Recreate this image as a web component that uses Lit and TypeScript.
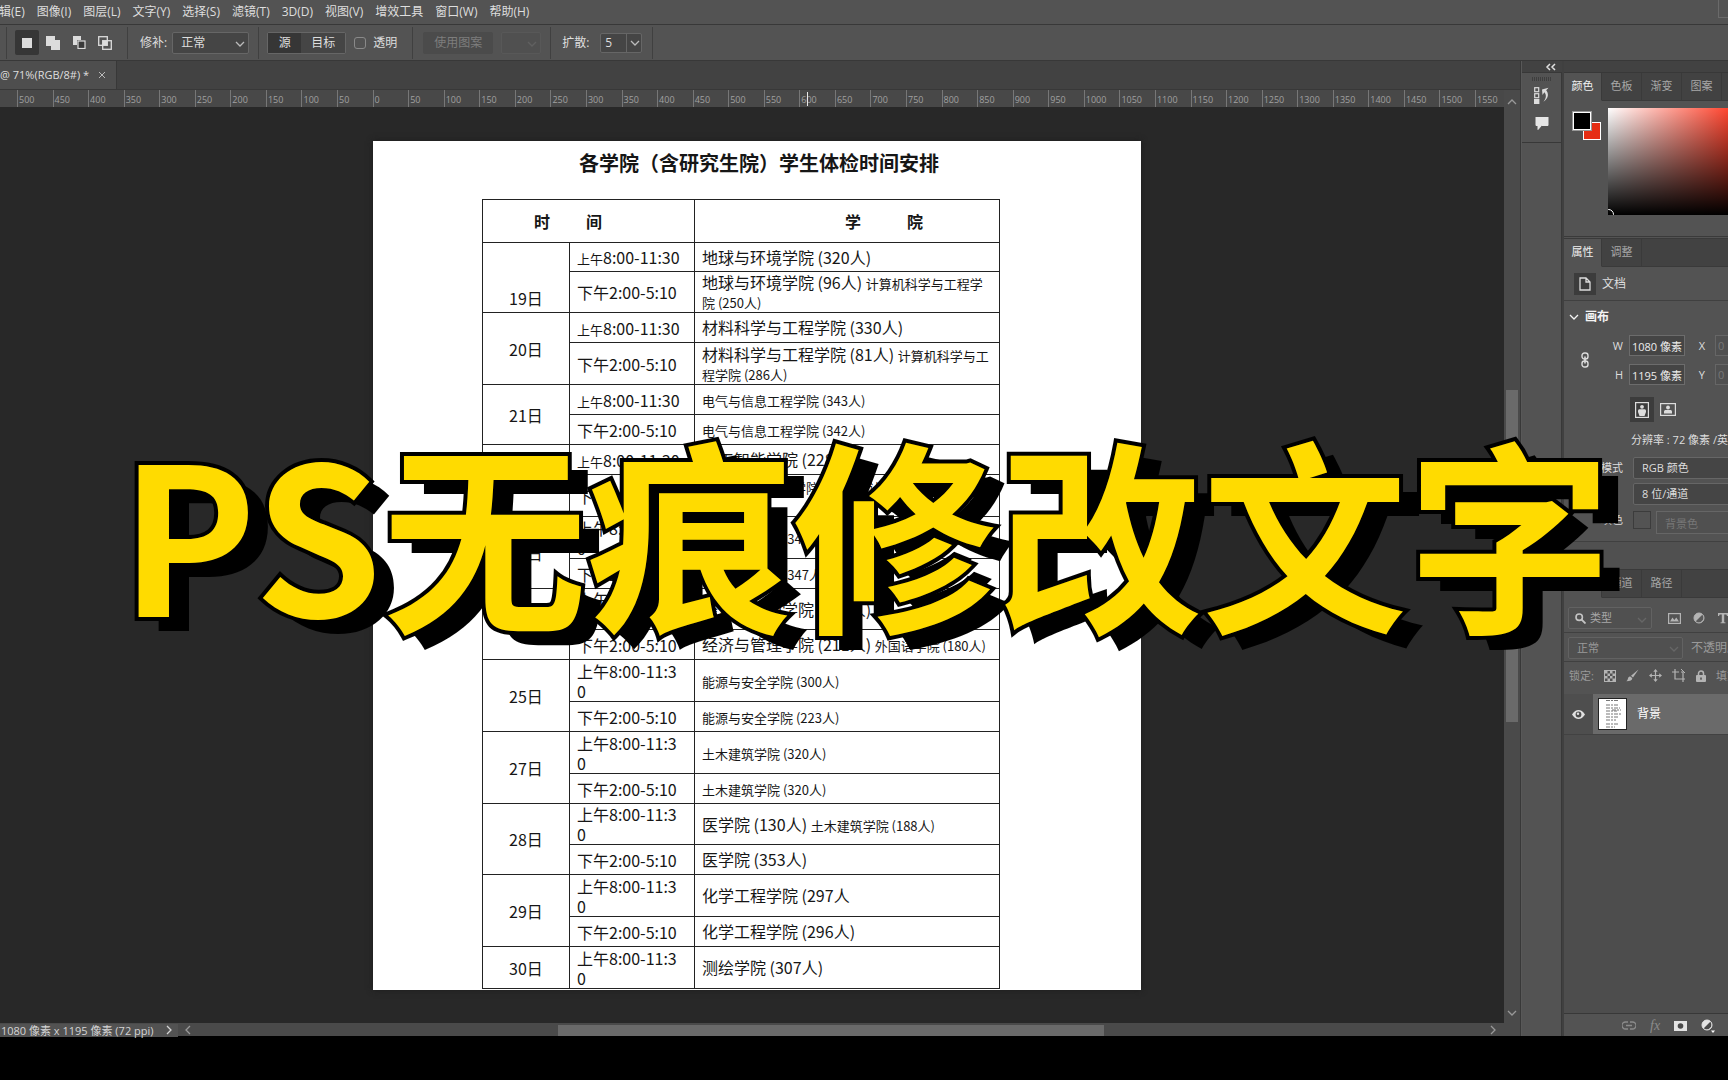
import { LitElement, html, css, svg, nothing } from "lit";
import { customElement } from "lit/decorators.js";

type Part = { t: string; small?: boolean };
type Slot = { size: "slim" | "short" | "mid" | "tall"; time: "am" | "pm" | "wrap"; who: Part[] };
type Day = { day: string; low?: boolean; slots: Slot[] };

const L = (t: string): Part => ({ t });
const S = (t: string): Part => ({ t, small: true });

const DAYS: Day[] = [
  { day: "19日", low: true, slots: [
    { size: "slim", time: "am", who: [L("地球与环境学院 (320人)")] },
    { size: "mid", time: "pm", who: [L("地球与环境学院 (96人) "), S("计算机科学与工程学院 (250人)")] },
  ] },
  { day: "20日", slots: [
    { size: "short", time: "am", who: [L("材料科学与工程学院 (330人)")] },
    { size: "tall", time: "pm", who: [L("材料科学与工程学院 (81人) "), S("计算机科学与工程学院 (286人)")] },
  ] },
  { day: "21日", slots: [
    { size: "short", time: "am", who: [S("电气与信息工程学院 (343人)")] },
    { size: "short", time: "pm", who: [S("电气与信息工程学院 (342人)")] },
  ] },
  { day: "22日", slots: [
    { size: "short", time: "am", who: [L("人工智能学院 (228人)")] },
    { size: "tall", time: "pm", who: [S("电气与信息工程学院 (120人) 计算机科学与工程学院 (160人)")] },
  ] },
  { day: "23日", slots: [
    { size: "tall", time: "wrap", who: [S("机械工程学院 (347人)")] },
    { size: "short", time: "pm", who: [S("机械工程学院 (347人)")] },
  ] },
  { day: "24日", slots: [
    { size: "mid", time: "wrap", who: [L("经济与管理学院 (300人)")] },
    { size: "short", time: "pm", who: [L("经济与管理学院 (211人) "), S("外国语学院 (180人)")] },
  ] },
  { day: "25日", slots: [
    { size: "tall", time: "wrap", who: [S("能源与安全学院 (300人)")] },
    { size: "short", time: "pm", who: [S("能源与安全学院 (223人)")] },
  ] },
  { day: "27日", slots: [
    { size: "tall", time: "wrap", who: [S("土木建筑学院 (320人)")] },
    { size: "short", time: "pm", who: [S("土木建筑学院 (320人)")] },
  ] },
  { day: "28日", slots: [
    { size: "mid", time: "wrap", who: [L("医学院 (130人) "), S("土木建筑学院 (188人)")] },
    { size: "short", time: "pm", who: [L("医学院 (353人)")] },
  ] },
  { day: "29日", slots: [
    { size: "tall", time: "wrap", who: [L("化学工程学院 (297人")] },
    { size: "short", time: "pm", who: [L("化学工程学院 (296人)")] },
  ] },
  { day: "30日", slots: [
    { size: "tall", time: "wrap", who: [L("测绘学院 (307人)")] },
  ] },
];

const MENUS = ["编辑(E)", "图像(I)", "图层(L)", "文字(Y)", "选择(S)", "滤镜(T)", "3D(D)", "视图(V)", "增效工具", "窗口(W)", "帮助(H)"];

const chevron = (dir: "down" | "up" | "left" | "right") => {
  const d = { down: "M1 3l4 4 4-4", up: "M1 7l4-4 4 4", left: "M7 1L3 5l4 4", right: "M3 1l4 4-4 4" }[dir];
  return html`<svg class="chev" viewBox="0 0 10 10" width="10" height="10" aria-hidden="true"><path d=${d} fill="none" stroke="currentColor" stroke-width="1.3"/></svg>`;
};

const icon = (w: number, h: number, body: unknown) =>
  html`<svg class="ico" viewBox="0 0 ${w} ${h}" width=${w} height=${h} aria-hidden="true">${body}</svg>`;

const I = {
  newSel: icon(10, 10, svg`<rect width="10" height="10" fill="#dcdcdc"/>`),
  addSel: icon(14, 14, svg`<path d="M0 0h9v4h5v10H5v-4H0z" fill="#dcdcdc"/>`),
  subSel: icon(13, 13, svg`<path d="M0 0h8v4H4v5H0z" fill="#dcdcdc"/><rect x="5" y="5" width="7" height="7.500" fill="#3a3a3a" stroke="#dcdcdc" stroke-width="1.200"/>`),
  intSel: icon(14, 14, svg`<rect x=".7" y=".7" width="8.600" height="8.600" fill="none" stroke="#dcdcdc" stroke-width="1.300"/><rect x="4.700" y="4.700" width="8.600" height="8.600" fill="none" stroke="#dcdcdc" stroke-width="1.300"/><rect x="5" y="5" width="4" height="4" fill="#dcdcdc"/>`),
  history: icon(16, 18, svg`<rect x=".7" y=".7" width="4" height="4" fill="none" stroke="#dcdcdc" stroke-width="1.200"/><rect x=".7" y="6.700" width="4" height="4" fill="none" stroke="#dcdcdc" stroke-width="1.200"/><rect y="12" width="5.400" height="5" fill="#dcdcdc"/><path d="M8 2.500l6.500-1.800-2.300 2.600c2.500 3 2.800 7.500-2.700 11.500 3-4 3-6.800.9-9.500L8.500 8z" fill="#dcdcdc"/>`),
  comment: icon(14, 13, svg`<path d="M1 0h12v8.500H6.500L3 12.500V8.500H1z" fill="#e6e6e6" stroke="#e6e6e6" stroke-linejoin="round"/>`),
  doc: icon(12, 14, svg`<path d="M1 1h6l4 4v8H1zM7 1v4h4" fill="none" stroke="#dcdcdc" stroke-width="1.300"/>`),
  chain: icon(8, 16, svg`<rect x="1" y="1" width="6" height="6" rx="2.500" fill="none" stroke="#dcdcdc" stroke-width="1.400"/><rect x="1" y="9" width="6" height="6" rx="2.500" fill="none" stroke="#dcdcdc" stroke-width="1.400"/><path d="M4 4.500v7" stroke="#dcdcdc" stroke-width="1.600"/>`),
  portrait: icon(14, 16, svg`<rect x=".6" y=".6" width="12.800" height="14.800" fill="none" stroke="#dcdcdc" stroke-width="1.200"/><circle cx="7" cy="4.800" r="1.900" fill="#dcdcdc"/><path d="M3 10V8.500C3 7.500 4 7.200 5 7.200h4c1 0 2 .3 2 1.300V10L9.500 14h-5z" fill="#dcdcdc"/>`),
  landscape: icon(16, 13, svg`<rect x=".6" y=".6" width="14.800" height="11.800" fill="none" stroke="#dcdcdc" stroke-width="1.200"/><circle cx="8" cy="4.500" r="1.900" fill="#dcdcdc"/><path d="M4 10.500V8.500c0-1 .8-1.500 2-1.500h4c1.200 0 2 .5 2 1.500v2z" fill="#dcdcdc"/>`),
  search: icon(11, 11, svg`<circle cx="4.200" cy="4.200" r="3.200" fill="none" stroke="#c4c4c4" stroke-width="1.600"/><path d="M6.500 6.500l4 4" stroke="#c4c4c4" stroke-width="1.800"/>`),
  picture: icon(13, 11, svg`<rect x=".6" y=".6" width="11.800" height="9.800" fill="none" stroke="#b4b4b4" stroke-width="1.200"/><path d="M2 8.500l2.500-4L6.300 7l2-2.500 2.700 4z" fill="#b4b4b4"/>`),
  adjust: icon(12, 12, svg`<circle cx="6" cy="6" r="5" fill="#b4b4b4"/><path d="M2.500 9.500A5 5 0 0 0 9.500 2.500z" fill="#5a5a5a"/><circle cx="6" cy="6" r="5" fill="none" stroke="#b4b4b4"/>`),
  type: icon(12, 12, svg`<path d="M1 1h10v3h-1L9.300 2.400H7.200v7.800l1.300.3v.7h-5v-.7l1.300-.3V2.400H2.700L2 4H1z" fill="#b4b4b4"/>`),
  checker: icon(12, 12, svg`<rect x=".5" y=".5" width="11" height="11" fill="none" stroke="#b4b4b4"/><path d="M1 1h2.500v2.500H1zM6 1h2.500v2.500H6zM3.500 3.500H6V6H3.500zM8.500 3.500H11V6H8.500zM1 6h2.500v2.500H1zM6 6h2.500v2.500H6zM3.500 8.500H6V11H3.500zM8.500 8.500H11V11H8.500z" fill="#b4b4b4"/>`),
  brush: icon(13, 13, svg`<path d="M12.500.5L7 8.500 5 6.800zM4.300 7.500l2 1.800c0 2-2 3-6 3 1.500-1 1.300-2 1.800-3.300.4-1 1.200-1.500 2.200-1.500z" fill="#b4b4b4"/>`),
  move: icon(13, 13, svg`<path d="M6.500 1.500v10M1.500 6.500h10" stroke="#b4b4b4" stroke-width="1.200"/><path d="M6.500 0l2.200 2.800H4.300zM6.500 13l2.200-2.800H4.300zM0 6.500l2.800-2.200v4.400zM13 6.500l-2.800-2.200v4.400z" fill="#b4b4b4"/>`),
  frame: icon(14, 13, svg`<path d="M3 0v10h10M0 3h7M11 5v8M9 3l2 0v2" fill="none" stroke="#b4b4b4" stroke-width="1.200"/><path d="M9 0l4 4" stroke="#b4b4b4"/>`),
  lock: icon(10, 12, svg`<rect y="5" width="10" height="7" rx="1" fill="#b4b4b4"/><path d="M2.500 5V3.500a2.500 2.500 0 0 1 5 0V5" fill="none" stroke="#b4b4b4" stroke-width="1.500"/><rect x="4.200" y="7.500" width="1.600" height="2.200" fill="#535353"/>`),
  eye: icon(13, 9, svg`<path d="M0 4.500C2 1.300 4.200 0 6.500 0S11 1.300 13 4.500C11 7.700 8.800 9 6.500 9S2 7.700 0 4.500z" fill="#e0e0e0"/><circle cx="6.500" cy="4.500" r="2.900" fill="#4d4d4d"/><circle cx="6" cy="3.800" r="1.200" fill="#e0e0e0"/>`),
  link2: icon(14, 9, svg`<path d="M6 1H3.500a3.200 3.200 0 0 0 0 7H6M8 1h2.500a3.200 3.200 0 0 1 0 7H8M4 4.500h6" fill="none" stroke="#8c8c8c" stroke-width="1.300"/>`),
  mask: icon(13, 10, svg`<rect width="13" height="10" fill="#e4e4e4"/><circle cx="6.500" cy="5" r="2.800" fill="#4a4a4a"/>`),
  adjust2: icon(14, 14, svg`<circle cx="6" cy="6" r="5" fill="#e4e4e4"/><path d="M2.500 9.500A5 5 0 0 0 9.500 2.500z" fill="#4a4a4a"/><circle cx="6" cy="6" r="5" fill="none" stroke="#e4e4e4"/><path d="M10 11.500h4l-2 2.500z" fill="#fff"/>`),
};

@customElement("exam-sheet")
export class ExamSheet extends LitElement {
  static styles = css`
    :host { display: block; background: #fff; color: #161616; font-family: "Noto Sans CJK SC", sans-serif; padding: 8px 128px 1px 109px; box-shadow: 0 0 6px #1c1c1c; }
    h2 { margin: 0 0 22px 97px; font-size: 20px; line-height: 28px; font-weight: 700; white-space: nowrap; }
    table { border-collapse: collapse; table-layout: fixed; width: 518px; font-size: 16px; line-height: 20px; }
    .c1 { width: 87px; }
    .c2 { width: 125px; }
    th, td { border: 1px solid #222; padding: 0; }
    .head { height: 42px; text-align: left; }
    .when { padding-left: 51px; }
    .where { padding-left: 150px; }
    .pair { display: flex; gap: 36px; }
    .wide { gap: 46px; }
    .day { text-align: center; }
    .low { vertical-align: bottom; padding-bottom: 4px; }
    .time, .who { padding: 0 6px 0 7px; text-align: left; }
    .who { line-height: 19px; }
    .time { white-space: nowrap; }
    .slim { height: 28px; }
    .short { height: 29px; }
    .mid { height: 40px; }
    .tall { height: 41px; }
    .small { font-size: 13px; line-height: 14px; }
  `;
  private time(k: Slot["time"]) {
    if (k === "am") return html`<span class="small">上午</span>8:00-11:30`;
    if (k === "pm") return html`下午2:00-5:10`;
    return html`上午8:00-11:3<br>0`;
  }
  render() {
    return html`
      <h2>各学院（含研究生院）学生体检时间安排</h2>
      <table>
        <colgroup><col class="c1"><col class="c2"><col></colgroup>
        <thead>
          <tr>
            <th class="head when" colspan="2"><span class="pair"><span>时</span><span>间</span></span></th>
            <th class="head where"><span class="pair wide"><span>学</span><span>院</span></span></th>
          </tr>
        </thead>
        <tbody>
          ${DAYS.map((d) => d.slots.map((s, i) => html`
            <tr>
              ${i === 0 ? html`<td class="day ${d.low ? "low" : ""}" rowspan=${d.slots.length}>${d.day}</td>` : nothing}
              <td class="time ${s.size}">${this.time(s.time)}</td>
              <td class="who">${s.who.map((p) => html`<span class=${p.small ? "small" : ""}>${p.t}</span>`)}</td>
            </tr>`))}
        </tbody>
      </table>`;
  }
}

@customElement("app-root")
export class AppRoot extends LitElement {
  static styles = css`
    :host { display: flex; flex-direction: column; position: relative; min-height: 100vh; box-sizing: border-box; padding-bottom: 44px; overflow: hidden; background: #000; color: #dedede; font-family: "Open Sans", "Noto Sans CJK SC", sans-serif; font-size: 12px; line-height: 16px; }
    * { box-sizing: border-box; }
    svg { display: block; flex: none; }
    button, select, input { font: inherit; color: inherit; margin: 0; }
    button { background: none; border: 0; padding: 0; white-space: nowrap; }
    .menu { display: flex; align-items: center; gap: 12px; height: 25px; background: #535353; border-bottom: 1px solid #383838; white-space: nowrap; }
    .menu button:first-child { margin-left: -13px; }
    .corner { margin-left: auto; width: 10px; height: 18px; align-self: flex-start; border: 1px solid #6a6a6a; border-width: 0 0 1px 1px; }
    .options { display: flex; align-items: center; height: 36px; background: #535353; border-bottom: 1px solid #383838; padding: 0 6px; white-space: nowrap; }
    .sep { width: 1px; height: 32px; background: #404040; flex: none; }
    .modes { display: flex; align-items: center; gap: 2px; padding: 0 10px 0 8px; }
    .modes button { width: 24px; height: 25px; display: grid; place-items: center; border-radius: 2px; }
    .modes .on { background: #363636; }
    .group { display: flex; align-items: center; }
    .patch { gap: 5px; padding: 0 9px 0 12px; }
    .pick { position: relative; display: block; }
    .pick select { display: block; width: 100%; height: 22px; appearance: none; background: #454545; border: 1px solid #666; border-radius: 2px; padding: 0 0 0 8px; }
    .pick .chev { position: absolute; right: 4px; top: 7px; color: #bbb; pointer-events: none; }
    .p-mode { width: 77px; }
    .seg { margin: 0 8px; border: 1px solid #666; border-radius: 2px; height: 22px; }
    .seg button { height: 20px; background: #454545; width: 44px; }
    .seg .on { background: #363636; width: 33px; }
    .clear { gap: 7px; margin-right: 15px; }
    .clear input { appearance: none; width: 12px; height: 12px; border: 1px solid #8a8a8a; border-radius: 3px; }
    .pattern { width: 70px; height: 22px; margin: 0 8px 0 10px; background: #4b4b4b; color: #7d7d7d; border-radius: 2px; }
    .p-dim { width: 40px; margin-right: 9px; }
    .p-dim select { background: #505050; border-color: #5b5b5b; }
    .p-dim .chev { color: #606060; }
    .spread { gap: 11px; padding: 0 10px 0 11px; }
    .p-num { width: 42px; }
    .p-num select { padding-left: 4px; height: 20px; }
    .p-num::after { content: ""; position: absolute; right: 15px; top: 1px; bottom: 1px; width: 1px; background: #666; }
    .p-num .chev { right: 2px; top: 5px; }
    .main { display: grid; grid-template-columns: minmax(0, 1fr) 41px 166px; flex: 1; background: #535353; }
    .work { display: flex; flex-direction: column; border-right: 1px solid #383838; }
    .tabs { display: flex; height: 28px; background: #424242; }
    .tab { display: flex; align-items: center; gap: 9px; width: 117px; background: #4e4e4e; border-right: 1px solid #383838; white-space: nowrap; font-size: 11px; }
    .view { display: grid; grid-template-columns: minmax(0, 1fr) 16px; grid-template-rows: 17px minmax(0, 1fr); flex: 1; background: #4a4a4a; border-top: 1px solid #383838; }
    .ruler { position: relative; display: grid; grid-template-columns: repeat(41, 1fr) 29px; padding-left: 17px; color: #a0a0a0; font-size: 9px; line-height: 20px; background: #484848; overflow: hidden; }
    .mark { border-left: 1px solid #777; padding-left: 1px; background: repeating-linear-gradient(to right, transparent 0 calc(10% - 1px), #6a6a6a calc(10% - 1px) 10%) bottom / 100% 2px no-repeat; }
    .cursor { position: absolute; left: 807px; top: 2px; width: 1px; height: 14px; background: #e8e8e8; }
    .canvas { background: #282828; padding: 34px 0 33px 373px; }
    exam-sheet { width: 768px; }
    .vbar { grid-column: 2; grid-row: 1 / 3; display: flex; flex-direction: column; align-items: center; padding: 7px 0 5px; color: #999; }
    .vthumb { width: 12px; height: 332px; margin: 283px 0 auto; background: #6a6a6a; }
    .status { display: flex; align-items: center; height: 13px; background: #4a4a4a; color: #d4d4d4; white-space: nowrap; font-size: 11px; line-height: 13px; padding-top: 1px; }
    .info { display: flex; align-items: center; justify-content: space-between; width: 178px; padding: 0 4px 0 1px; background: #525252; }
    .hbar { display: flex; flex: 1; align-items: center; padding: 0 22px 0 5px; color: #999; }
    .hthumb { width: 546px; height: 11px; margin: 1px auto 0 365px; background: #6a6a6a; }
    .dock { border-right: 1px solid #383838; border-left: 1px solid #585858; }
    .strip { display: flex; justify-content: flex-end; align-items: center; height: 12px; background: #424242; border-bottom: 1px solid #383838; margin-right: -1px; }
    .icons { display: flex; flex-direction: column; align-items: center; gap: 12px; padding: 4px 0 12px; border-bottom: 1px solid #383838; }
    .grip { width: 20px; height: 4px; margin-bottom: -6px; background: repeating-linear-gradient(to right, #3e3e3e 0 1px, transparent 1px 2px); }
    .side { display: flex; flex-direction: column; border-left: 2px solid #404040; overflow: hidden; font-size: 11px; white-space: nowrap; }
    .side .strip { padding: 0; margin: 0; flex: none; }
    .ptabs { display: flex; height: 28px; background: #424242; flex: none; }
    .ptabs button { width: 40px; flex: none; border-right: 1px solid #3a3a3a; border-bottom: 1px solid #3a3a3a; color: #a8a8a8; padding-bottom: 2px; }
    .ptabs .on { width: 38px; background: #535353; color: #f0f0f0; border-bottom-color: #535353; }
    .ptabs::after { content: ""; flex: 1; border-bottom: 1px solid #3a3a3a; }
    .color { display: flex; height: 138px; padding: 7px 0 0 7px; gap: 7px; flex: none; border-bottom: 3px double #3a3a3a; }
    .swatches { position: relative; width: 30px; height: 32px; margin-top: 2px; }
    .fg, .bg { position: absolute; width: 18px; height: 18px; border: 1px solid #fff; }
    .fg { left: 2px; top: 2px; background: #000; outline: 1px solid #999; }
    .bg { left: 12px; top: 12px; background: #e62e14; }
    .field { position: relative; flex: 1; height: 107px; overflow: hidden; background: linear-gradient(to bottom, transparent, #000), linear-gradient(to right, #fff, #ff4630); }
    .dot { position: absolute; left: -5px; bottom: -5px; width: 11px; height: 11px; border: 1px solid #fff; border-radius: 50%; }
    .docrow { display: flex; align-items: center; gap: 6px; height: 34px; padding-left: 10px; border-bottom: 1px solid #404040; flex: none; font-size: 12px; }
    .docbox { display: grid; place-items: center; width: 22px; height: 22px; background: #3c3c3c; }
    .sect { display: flex; align-items: center; gap: 6px; height: 31px; padding-left: 5px; color: #f4f4f4; font-weight: 700; font-size: 12px; flex: none; }
    .size { display: grid; grid-template-columns: 12px 24px 56px 14px 60px; column-gap: 6px; row-gap: 8px; align-items: center; padding: 3px 0 0 17px; flex: none; }
    .size label { text-align: right; }
    .size .chain { grid-row: 1 / 3; }
    .size input, .fillrow input { width: 100%; height: 21px; min-width: 0; border: 1px solid #6c6c6c; background: #454545; padding: 0 2px; color: #ececec; }
    .size input:disabled, .fillrow input:disabled { background: #505050; color: #777; border-color: #666; }
    .size input:disabled { margin-left: 4px; }
    .orient { display: flex; align-items: center; gap: 2px; padding: 12px 0 0 66px; flex: none; }
    .orient button { width: 24px; height: 25px; display: grid; place-items: center; }
    .orient .on { background: #3c3c3c; }
    .res { padding: 10px 0 9px 67px; flex: none; }
    .form { display: grid; grid-template-columns: 59px 130px; column-gap: 10px; row-gap: 4px; flex: none; }
    .form > label { text-align: right; line-height: 22px; }
    .fillrow { display: flex; gap: 5px; padding-top: 2px; }
    .fillrow input { padding-left: 8px; height: 23px; flex: 1; }
    .chip { width: 18px; height: 18px; border: 1px solid #3c3c3c; flex: none; }
    .gap { height: 29px; margin-top: 7px; border-top: 1px solid #404040; background: #505050; border-bottom: 1px solid #3a3a3a; flex: none; }
    .filter { display: flex; align-items: center; gap: 12px; height: 35px; padding: 6px 0 0 4px; border-bottom: 1px solid #404040; flex: none; }
    .find { display: flex; align-items: center; width: 84px; border: 1px solid #626262; border-radius: 2px; padding-left: 6px; background: #505050; flex: none; color: #a8a8a8; margin-right: 4px; }
    .find .pick { flex: 1; }
    .find select { border: 0; background: none; height: 20px; padding-left: 4px; }
    .dimc .chev { color: #666; }
    .blend { display: flex; align-items: center; gap: 8px; height: 29px; padding: 2px 0 0 4px; color: #9a9a9a; border-bottom: 1px solid #404040; flex: none; font-size: 12px; }
    .blend .pick { width: 115px; flex: none; font-size: 11px; }
    .blend select { background: #505050; border-color: #626262; }
    .locks { display: flex; align-items: center; gap: 10px; height: 32px; padding: 0 0 5px 5px; color: #9a9a9a; flex: none; }
    .layer { display: flex; height: 41px; background: #4e4e4e; border-bottom: 1px solid #424242; flex: none; color: #fff; }
    .see { display: grid; place-items: center; width: 29px; }
    .name { display: flex; align-items: center; gap: 10px; flex: 1; background: #6a6a6a; padding-left: 5px; font-size: 12px; }
    .rest { flex: 1; background: #4d4d4d; border-bottom: 1px solid #383838; }
    .foot { display: flex; align-items: center; gap: 14px; height: 22px; padding: 1px 0 0 58px; flex: none; }
    .fx { font: italic 14px/14px "Liberation Serif", serif; color: #8c8c8c; }
    .banner { position: absolute; left: 120px; top: 378px; margin: 0; font: 700 205px/300px "Noto Sans CJK SC", sans-serif; color: #ffdb00; white-space: nowrap; -webkit-text-stroke: 8px #000; paint-order: stroke fill; isolation: isolate; pointer-events: none; }
    .banner::before { content: attr(data-text); position: absolute; left: 20px; top: 14px; z-index: -1; color: #000; -webkit-text-stroke: 0; }
  `;

  private marks() {
    return Array.from({ length: 42 }, (_, i) => html`<span class="mark">${Math.abs(i * 50 - 500)}</span>`);
  }

  render() {
    return html`
      <nav class="menu" aria-label="菜单">
        ${MENUS.map((m) => html`<button>${m}</button>`)}
        <span class="corner"></span>
      </nav>
      <div class="options">
        <i class="sep"></i>
        <div class="modes">
          <button class="on" aria-label="新选区">${I.newSel}</button>
          <button aria-label="添加到选区">${I.addSel}</button>
          <button aria-label="从选区减去">${I.subSel}</button>
          <button aria-label="与选区交叉">${I.intSel}</button>
        </div>
        <i class="sep"></i>
        <div class="group patch"><label for="patch">修补:</label>
          <span class="pick p-mode"><select id="patch"><option>正常</option></select>${chevron("down")}</span></div>
        <i class="sep"></i>
        <div class="group seg"><button class="on">源</button><button>目标</button></div>
        <label class="group clear"><input type="checkbox">透明</label>
        <i class="sep"></i>
        <button class="pattern" disabled>使用图案</button>
        <span class="pick p-dim"><select aria-label="图案" disabled></select>${chevron("down")}</span>
        <i class="sep"></i>
        <div class="group spread"><label for="spread">扩散:</label>
          <span class="pick p-num"><select id="spread"><option>5</option></select>${chevron("down")}</span></div>
        <i class="sep"></i>
      </div>
      <div class="main">
        <section class="work">
          <div class="tabs"><div class="tab"><span>@ 71%(RGB/8#) *</span>
            <button aria-label="关闭">${icon(8, 8, svg`<path d="M1 1l6 6M7 1L1 7" stroke="#bbb"/>`)}</button></div></div>
          <div class="view">
            <div class="ruler">${this.marks()}<i class="cursor"></i></div>
            <div class="canvas"><exam-sheet></exam-sheet></div>
            <div class="vbar">${chevron("up")}<i class="vthumb"></i>${chevron("down")}</div>
          </div>
          <div class="status">
            <div class="info"><span>1080 像素 x 1195 像素 (72 ppi)</span>${chevron("right")}</div>
            <div class="hbar">${chevron("left")}<i class="hthumb"></i>${chevron("right")}</div>
          </div>
        </section>
        <aside class="dock">
          <div class="strip">${icon(20, 8, svg`<path d="M8 1L5 4l3 3M13 1l-3 3 3 3" fill="none" stroke="#e0e0e0" stroke-width="1.500"/>`)}</div>
          <div class="icons"><i class="grip"></i>${I.history}${I.comment}</div>
        </aside>
        <aside class="side">
          <div class="strip"></div>
          <div class="ptabs"><button class="on">颜色</button><button>色板</button><button>渐变</button><button>图案</button></div>
          <div class="color"><div class="swatches"><i class="bg"></i><i class="fg"></i></div><div class="field"><i class="dot"></i></div></div>
          <div class="ptabs"><button class="on">属性</button><button>调整</button></div>
          <div class="docrow"><span class="docbox">${I.doc}</span>文档</div>
          <div class="sect">${chevron("down")}画布</div>
          <div class="size">
            <span class="chain">${I.chain}</span>
            <label for="w">W</label><input id="w" value="1080 像素"><label for="x">X</label><input id="x" value="0" disabled>
            <label for="h">H</label><input id="h" value="1195 像素"><label for="y">Y</label><input id="y" value="0" disabled>
          </div>
          <div class="orient"><button class="on" aria-label="纵向">${I.portrait}</button><button aria-label="横向">${I.landscape}</button></div>
          <div class="res">分辨率 : 72 像素 /英寸</div>
          <div class="form">
            <label for="mode">模式</label><span class="pick"><select id="mode"><option>RGB 颜色</option></select></span>
            <span></span><span class="pick"><select aria-label="位深"><option>8 位/通道</option></select></span>
            <label for="fill">填色</label><span class="fillrow"><i class="chip"></i><input id="fill" value="背景色" disabled></span>
          </div>
          <div class="gap"></div>
          <div class="ptabs"><button class="on">图层</button><button>通道</button><button>路径</button></div>
          <div class="filter">
            <div class="find">${I.search}<span class="pick dimc"><select aria-label="筛选"><option>类型</option></select>${chevron("down")}</span></div>
            ${I.picture}${I.adjust}${I.type}
          </div>
          <div class="blend"><span class="pick dimc"><select aria-label="混合模式"><option>正常</option></select>${chevron("down")}</span>不透明度</div>
          <div class="locks"><span>锁定:</span>${I.checker}${I.brush}${I.move}${I.frame}${I.lock}<span>填充</span></div>
          <div class="layer"><span class="see">${I.eye}</span>
            <div class="name">${icon(29, 32, svg`<rect x=".5" y=".5" width="28" height="31" fill="#fff" stroke="#222"/><path d="M8 2.500h13M8 7h12M8 10h14M8 13h11M14 12h9M8 16h15M8 19h12M8 22h10M8 26h13M8 29h9" stroke="#777" stroke-dasharray="4 1 2 1"/>`)}背景</div></div>
          <div class="rest"></div>
          <div class="foot">${I.link2}<span class="fx">fx</span>${I.mask}${I.adjust2}</div>
        </aside>
      </div>
      <h1 class="banner" data-text="PS无痕修改文字">PS无痕修改文字</h1>`;
  }
}
